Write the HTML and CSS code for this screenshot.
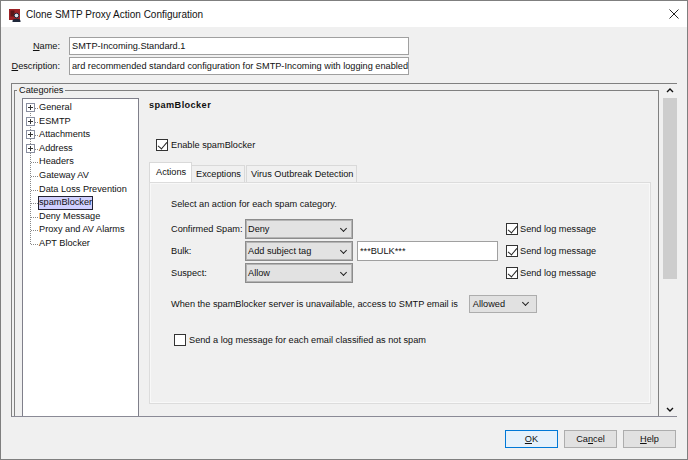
FILE: index.html
```html
<!DOCTYPE html>
<html lang="en">
<head>
<meta charset="utf-8">
<title>Clone SMTP Proxy Action Configuration</title>
<link rel="stylesheet" href="styles.css">
</head>
<body>
<div class="window">
  <header class="titlebar">
    <svg class="app-icon" width="13" height="13" viewBox="0 0 13 13"><rect x="0" y="0" width="11" height="11" fill="#9c2226"/><rect x="1.500" y="1.500" width="4" height="6" fill="#5a1518"/><circle cx="7.500" cy="6.500" r="2.300" fill="#dfe3ea" stroke="#20283a"/><path d="M3.500 13v-1c0-1.300 1.700-2.200 4-2.200s4 .9 4 2.200v1z" fill="#20283a"/></svg>
    <span class="title">Clone SMTP Proxy Action Configuration</span>
    <svg class="close" width="10" height="10" viewBox="0 0 10 10"><path d="M.5.500l9 9M9.500.500l-9 9" stroke="#222" stroke-width="1" fill="none"/></svg>
  </header>
  <main class="body">
    <div class="form">
      <label class="form-label"><u>N</u>ame:</label><div class="input">SMTP-Incoming.Standard.1</div>
      <label class="form-label"><u>D</u>escription:</label><div class="input">ard recommended standard configuration for SMTP-Incoming with logging enabled</div>
    </div>
    <div class="outer">
      <div class="scroll-view">
        <fieldset class="categories">
          <legend>Categories</legend>
          <div class="split">
            <ul class="tree">
              <li class="node"><span class="plus"></span><span>General</span></li>
              <li class="node"><span class="plus"></span><span>ESMTP</span></li>
              <li class="node"><span class="plus"></span><span>Attachments</span></li>
              <li class="node"><span class="plus"></span><span>Address</span></li>
              <li class="node leaf"><span>Headers</span></li>
              <li class="node leaf"><span>Gateway AV</span></li>
              <li class="node leaf"><span>Data Loss Prevention</span></li>
              <li class="node leaf"><span class="selected">spamBlocker</span></li>
              <li class="node leaf"><span>Deny Message</span></li>
              <li class="node leaf"><span>Proxy and AV Alarms</span></li>
              <li class="node leaf"><span>APT Blocker</span></li>
            </ul>
            <section class="panel">
              <h2 class="heading">spamBlocker</h2>
              <label class="check enable"><span class="box on"></span>Enable spamBlocker</label>
              <div class="tabs">
                <span class="tab active">Actions</span><span class="tab tab-exc">Exceptions</span><span class="tab tab-virus">Virus Outbreak Detection</span>
              </div>
              <div class="tab-body">
                <p class="intro">Select an action for each spam category.</p>
                <div class="rows">
                  <div class="row"><span class="row-label">Confirmed Spam:</span><span class="select wide">Deny</span><span class="tag-slot"></span><label class="check"><span class="box on"></span>Send log message</label></div>
                  <div class="row"><span class="row-label">Bulk:</span><span class="select wide">Add subject tag</span><span class="tag-slot"><span class="input tag">***BULK***</span></span><label class="check"><span class="box on"></span>Send log message</label></div>
                  <div class="row"><span class="row-label">Suspect:</span><span class="select wide">Allow</span><span class="tag-slot"></span><label class="check"><span class="box on"></span>Send log message</label></div>
                </div>
                <div class="server-line"><span>When the spamBlocker server is unavailable, access to SMTP email is</span><span class="select small">Allowed</span></div>
                <label class="check notspam"><span class="box"></span>Send a log message for each email classified as not spam</label>
              </div>
            </section>
          </div>
        </fieldset>
        <div class="scrollbar">
          <svg class="arrow" width="14" height="14" viewBox="0 0 14 14"><path d="M4 8l3-3 3 3" stroke="#111" stroke-width="1.400" fill="none"/></svg>
          <div class="track"><div class="thumb"></div></div>
          <svg class="arrow" width="14" height="14" viewBox="0 0 14 14"><path d="M4 6l3 3 3-3" stroke="#111" stroke-width="1.400" fill="none"/></svg>
        </div>
      </div>
    </div>
    <footer class="buttons">
      <button class="btn default"><u>O</u>K</button>
      <button class="btn">Ca<u>n</u>cel</button>
      <button class="btn"><u>H</u>elp</button>
    </footer>
  </main>
</div>
</body>
</html>
```

FILE: styles.css
```css
* { box-sizing: border-box; }
html, body { margin: 0; padding: 0; }
body {
  width: 688px;
  height: 460px;
  overflow: hidden;
  font-family: "Liberation Sans", Arial, sans-serif;
  font-size: 9.2px;
  color: #111;
  background: #f0f0f0;
}
.window {
  width: 688px;
  height: 460px;
  border: 1px solid #7f7f7f;
  display: flex;
  flex-direction: column;
  background: #f0f0f0;
}
.titlebar {
  height: 26px;
  flex: none;
  background: #fff;
  display: flex;
  align-items: center;
  padding: 0 8px 0 8px;
}
.app-icon { flex: none; margin-top: 2px; }
.title { margin-left: 4px; font-size: 10px; flex: 1; }
.close { flex: none; margin-top: -1px; }
.body { flex: 1; display: flex; flex-direction: column; min-height: 0; }

.form {
  display: grid;
  grid-template-columns: 59px 340px;
  column-gap: 9px;
  row-gap: 2px;
  align-items: center;
  padding: 10px 0 0 0;
}
.form-label { text-align: right; }
.input {
  height: 18px;
  line-height: 16px;
  border: 1px solid #a0a0a0;
  background: #fff;
  padding: 0 2px;
  white-space: nowrap;
  overflow: hidden;
}

.outer {
  margin: 8px 10px 0 10px;
  height: 334px;
  border: 1px solid #808080;
  border-bottom-color: #8a8a96;
  flex: none;
}
.scroll-view { display: flex; height: 100%; }
.categories {
  flex: none;
  width: 645px;
  margin: 0 0 0 2px;
  padding: 0 0 0 7px;
  border: 1px solid #808080;
  border-bottom: 0;
  min-width: 0;
  height: 100%;
}
.categories legend {
  padding: 0 2px;
  margin-left: -5px;
  line-height: 12px;
  height: 12px;
  margin-bottom: 2px;
}
.split { display: flex; height: 318px; }
.tree {
  list-style: none;
  margin: 0;
  padding: 2px 0 0 0;
  width: 117px;
  flex: none;
  background: #fff;
  border: 1px solid #7f7f8a;
  border-bottom: 0;
  position: relative;
  white-space: nowrap;
}
.tree::before {
  content: "";
  position: absolute;
  left: 7px;
  top: 12px;
  height: 133px;
  border-left: 1px dotted #888;
}
.node {
  height: 13.6px;
  line-height: 13.6px;
  padding-left: 16px;
  position: relative;
}
.node::before {
  content: "";
  position: absolute;
  left: 8px;
  top: 7px;
  width: 7px;
  border-top: 1px dotted #888;
}
.plus {
  position: absolute;
  left: 3px;
  top: 2px;
  width: 9px;
  height: 9px;
  border: 1px solid #8a8fa0;
  background: linear-gradient(#333,#333) center/5px 1px no-repeat, linear-gradient(#333,#333) center/1px 5px no-repeat, #fff;
  z-index: 1;
}
.selected {
  display: inline-block;
  height: 14px;
  line-height: 12px;
  background: #d0d0ff;
  outline: 1px solid #223;
  outline-offset: -1px;
  padding: 0 1px;
  margin-left: -1px;
  position: relative;
}
.panel { flex: 1; min-width: 0; padding: 0 7px 0 10px; }
.heading { margin: 0; font-size: 9.2px; font-weight: bold; line-height: 13px; padding-top: 1px; letter-spacing: 0.4px; }
.check { display: flex; align-items: center; white-space: nowrap; }
.box {
  width: 12px;
  height: 12px;
  flex: none;
  border: 1px solid #333;
  background: #fff;
  margin-right: 2px;
  position: relative;
}
.box.on::after {
  content: "";
  position: absolute;
  left: 3px;
  top: 0;
  width: 4px;
  height: 8px;
  border: solid #222;
  border-width: 0 1px 1px 0;
  transform: rotate(40deg);
}
.enable { margin: 26px 0 0 7px; height: 13px; }
.enable .box { margin-right: 3px; }
.tabs { display: flex; align-items: flex-end; margin-top: 11px; height: 20px; }
.tab {
  height: 17px;
  line-height: 15px;
  border: 1px solid #d9d9d9;
  border-bottom: 0;
  border-left: 0;
  padding: 1px 4px 0;
  background: #f0f0f0;
  white-space: nowrap;
}
.tab.active {
  height: 20px;
  width: 43px;
  border-left: 1px solid #d9d9d9;
  background: #fff;
  padding: 1px 0 0 6px;
  line-height: 16px;
}
.tab-exc { width: 53px; }
.tab-virus { width: 111px; margin-left: 1px; border-left: 1px solid #d9d9d9; }
.tab-body {
  height: 222px;
  border: 1px solid #dcdcdc;
  box-shadow: inset 0 0 0 1px #f8f8f8;
  padding: 15px 0 0 21px;
}
.intro { margin: 0; line-height: 13px; }
.rows { display: flex; flex-direction: column; gap: 2px; margin-top: 8px; }
.row { display: flex; align-items: center; height: 20px; }
.row-label { width: 74px; flex: none; white-space: nowrap; }
.select {
  display: block;
  height: 20px;
  line-height: 18px;
  border: 1px solid #8c8c8c;
  box-shadow: inset 0 0 0 1px #b4b4b4;
  background: #e2e2e2;
  padding-left: 3px;
  position: relative;
}
.select::after {
  content: "";
  position: absolute;
  right: 6px;
  top: 6px;
  width: 4px;
  height: 4px;
  border: solid #222;
  border-width: 0 1px 1px 0;
  transform: rotate(45deg);
}
.wide { width: 108px; flex: none; padding-left: 2px; }
.tag-slot { width: 153px; flex: none; padding-left: 4px; }
.tag { display: block; width: 141px; height: 20px; line-height: 18px; }
.server-line {
  display: flex;
  align-items: center;
  gap: 11px;
  margin-top: 12px;
  height: 18px;
  white-space: nowrap;
}
.small { width: 68px; height: 18px; line-height: 16px; box-shadow: none; border-color: #adadad; background: #e1e1e1; }
.small::after { top: 4px; right: 8px; }
.notspam { margin: 21px 0 0 3px; height: 12px; }
.notspam .box { margin-right: 3px; }

.scrollbar {
  flex: none;
  width: 14px;
  margin-left: 4px;
  display: flex;
  flex-direction: column;
  background: #f0f0f0;
}
.arrow { flex: none; display: block; }
.track { flex: 1; }
.thumb { height: 181px; background: #cdcdcd; }

.buttons {
  display: flex;
  justify-content: flex-end;
  gap: 6px;
  margin-top: 13px;
  padding-right: 11px;
}
.btn {
  width: 53px;
  height: 18px;
  padding: 0;
  font: inherit;
  color: #111;
  background: #e1e1e1;
  border: 1px solid #adadad;
}
.btn.default { background: #e5f1fb; border-color: #0078d7; }
```
